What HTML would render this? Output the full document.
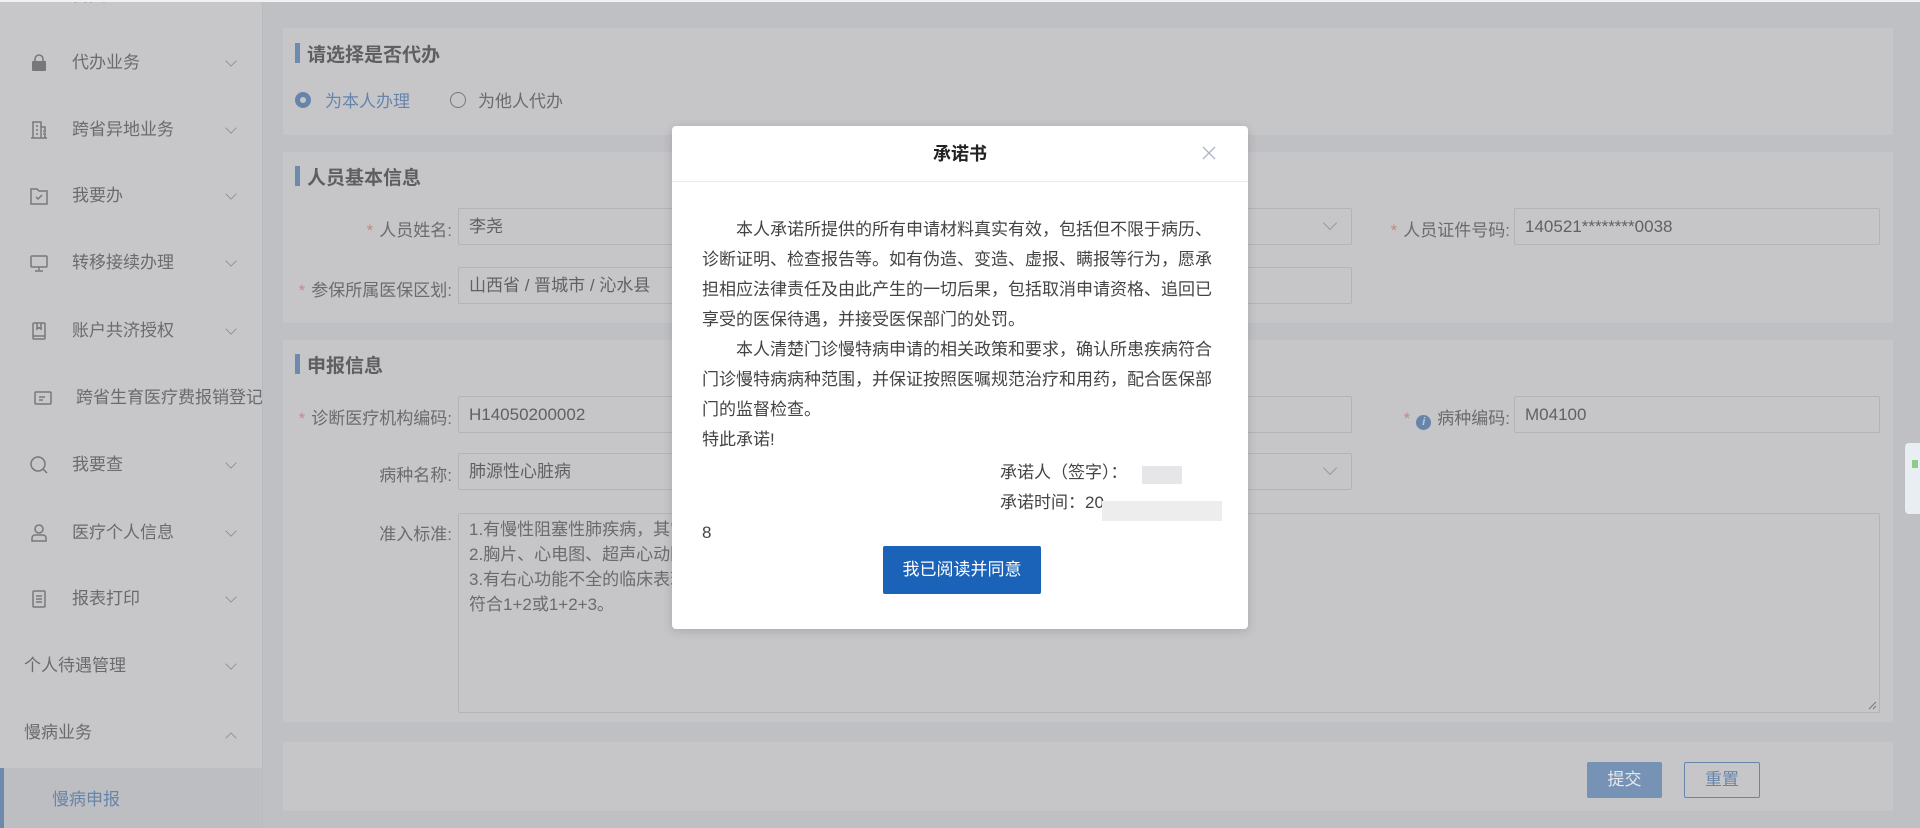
<!DOCTYPE html>
<html><head><meta charset="utf-8">
<style>
*{margin:0;padding:0;box-sizing:border-box}
body{width:1920px;height:828px;overflow:hidden;background:#bfc0c4;font-family:"Liberation Sans","Noto Sans CJK SC",sans-serif;position:relative;color:#6b6b6e}
.a{position:absolute}
#side{left:0;top:0;width:263px;height:828px;background:#c7c7ca;border-right:1px solid #b9babd;overflow:hidden}
.mi{position:absolute;left:0;width:262px;height:40px;font-size:17px;color:#6b6b6e;line-height:40px;white-space:nowrap;overflow:hidden}
.mi .ic{position:absolute;left:30px;top:11px;width:18px;height:18px}
.mi .t{position:absolute;left:72px;top:0}
.chev{position:absolute;left:226px;top:13px;width:10px;height:10px;border-right:1.3px solid #8a8a8e;border-bottom:1.3px solid #8a8a8e;transform:rotate(45deg) scale(0.8,0.8)}
.card{position:absolute;left:283px;width:1610px;background:#c6c6c9}
.title{position:absolute;left:12px;font-size:19px;font-weight:bold;color:#5f5f62;padding-left:12px}
.title:before{content:"";position:absolute;left:0;top:3px;width:5px;height:20px;background:#6d89ae}
.lbl{position:absolute;font-size:17px;color:#6b6b6e;text-align:right;white-space:nowrap}
.lbl i{font-style:normal;color:#c48888;margin-right:6px}
.inp{position:absolute;height:37px;border:1px solid #b3b4b8;background:#c6c6c9;border-radius:2px;font-size:17px;color:#616164;line-height:35px;padding-left:10px;white-space:nowrap;overflow:hidden}
.sel:after{content:"";position:absolute;right:16px;top:9px;width:9px;height:9px;border-right:1.3px solid #9a9a9e;border-bottom:1.3px solid #9a9a9e;transform:rotate(45deg)}
#modal{left:672px;top:126px;width:576px;height:503px;background:#fff;border-radius:4px;box-shadow:0 2px 10px rgba(0,0,0,.15)}
#modal .hd{position:absolute;left:0;top:0;width:576px;height:56px;border-bottom:1px solid #e8eaec;text-align:center;font-size:18px;font-weight:bold;color:#222;line-height:56px}
#modal .bd{position:absolute;left:30px;top:89px;width:520px;font-size:17px;line-height:30px;color:#444;white-space:nowrap}
</style></head><body>
<div class="a" style="left:0;top:0;width:1920px;height:2px;background:#f2f2f2;z-index:5"></div>
<div id="side" class="a">
  <div class="a" style="left:30px;top:-8px;width:16px;height:9px;border:2px solid #808084;border-top:none"></div>
  <div class="a" style="left:72px;top:-19px;font-size:17px;color:#6b6b6e">首页</div>

  <div class="mi" style="top:43px"><svg class="ic" viewBox="0 0 18 18"><path d="M5 7V5a4 4 0 0 1 8 0v2" fill="none" stroke="#78787c" stroke-width="1.6"/><rect x="2" y="7" width="14" height="10" rx="1" fill="#78787c"/></svg><span class="t">代办业务</span><span class="chev"></span></div>
  <div class="mi" style="top:110px"><svg class="ic" viewBox="0 0 18 18" fill="none" stroke="#78787c" stroke-width="1.5"><path d="M3 17V1h8v16M11 6h4v11M1 17h16M6 5h2M6 9h2M6 13h2M13 10h1M13 13h1"/></svg><span class="t">跨省异地业务</span><span class="chev"></span></div>
  <div class="mi" style="top:176px"><svg class="ic" viewBox="0 0 18 18" fill="none" stroke="#78787c" stroke-width="1.5"><path d="M1 2h6l2 2h8v13H1z"/><path d="M6 10l2 2 4-4"/></svg><span class="t">我要办</span><span class="chev"></span></div>
  <div class="mi" style="top:243px"><svg class="ic" viewBox="0 0 18 18" fill="none" stroke="#78787c" stroke-width="1.5"><rect x="1" y="2" width="16" height="11" rx="1"/><path d="M9 13v3M5 17h8"/></svg><span class="t">转移接续办理</span><span class="chev"></span></div>
  <div class="mi" style="top:311px"><svg class="ic" viewBox="0 0 18 18" fill="none" stroke="#78787c" stroke-width="1.5"><rect x="3" y="1" width="12" height="16" rx="1"/><path d="M7 1v6l2-1.5 2 1.5V1M3 14h12"/></svg><span class="t">账户共济授权</span><span class="chev"></span></div>
  <div class="mi" style="top:378px"><svg class="ic" viewBox="0 0 18 18" fill="none" stroke="#78787c" stroke-width="1.5" style="left:34px"><rect x="1" y="3" width="16" height="12" rx="1"/><path d="M5 8h6M5 11h4"/></svg><span class="t" style="left:76px">跨省生育医疗费报销登记</span></div>
  <div class="mi" style="top:445px"><svg class="ic" viewBox="0 0 18 18" fill="none" stroke="#78787c" stroke-width="1.5"><circle cx="8" cy="8" r="7"/><path d="M13 13l4 4"/></svg><span class="t">我要查</span><span class="chev"></span></div>
  <div class="mi" style="top:513px"><svg class="ic" viewBox="0 0 18 18" fill="none" stroke="#78787c" stroke-width="1.5"><circle cx="9" cy="5" r="4"/><path d="M2 17v-3a3 3 0 0 1 3-3h8a3 3 0 0 1 3 3v3z"/></svg><span class="t">医疗个人信息</span><span class="chev"></span></div>
  <div class="mi" style="top:579px"><svg class="ic" viewBox="0 0 18 18" fill="none" stroke="#78787c" stroke-width="1.5"><rect x="3" y="1" width="12" height="16" rx="1"/><path d="M6 6h6M6 9h6M6 12h6"/></svg><span class="t">报表打印</span><span class="chev"></span></div>
  <div class="mi" style="top:646px"><span class="t" style="left:24px">个人待遇管理</span><span class="chev"></span></div>
  <div class="mi" style="top:713px"><span class="t" style="left:24px">慢病业务</span><span class="chev" style="transform:rotate(-135deg) scale(0.8,0.8);top:20px"></span></div>
  <div class="a" style="left:0;top:768px;width:262px;height:60px;background:#bdbec2"></div>
  <div class="a" style="left:0;top:768px;width:4px;height:60px;background:#6d89ae"></div>
  <div class="mi" style="top:780px;color:#6784ab"><span class="t" style="left:52px">慢病申报</span></div>
</div>

<div class="card" style="top:28px;height:107px">
  <div class="title" style="top:12px">请选择是否代办</div>
  <div class="a" style="left:12px;top:64px;width:16px;height:16px;border-radius:50%;background:#6784ab"></div>
  <div class="a" style="left:17px;top:69px;width:6px;height:6px;border-radius:50%;background:#c6c6c9"></div>
  <div class="a" style="left:42px;top:59px;font-size:17px;color:#6784ab">为本人办理</div>
  <div class="a" style="left:167px;top:64px;width:16px;height:16px;border-radius:50%;border:1.3px solid #78787c"></div>
  <div class="a" style="left:195px;top:59px;font-size:17px;color:#6b6b6e">为他人代办</div>
</div>

<div class="card" style="top:152px;height:171px">
  <div class="title" style="top:11px">人员基本信息</div>
</div>
<div class="lbl" style="right:1468px;top:216px"><i>*</i>人员姓名:</div>
<div class="inp" style="left:458px;top:208px;width:300px">李尧</div>
<div class="inp sel" style="left:1000px;top:208px;width:352px"></div>
<div class="lbl" style="right:410px;top:216px"><i>*</i>人员证件号码:</div>
<div class="inp" style="left:1514px;top:208px;width:366px">140521********0038</div>
<div class="lbl" style="right:1468px;top:276px"><i>*</i>参保所属医保区划:</div>
<div class="inp" style="left:458px;top:267px;width:894px">山西省 / 晋城市 / 沁水县</div>

<div class="card" style="top:340px;height:382px">
  <div class="title" style="top:11px">申报信息</div>
</div>
<div class="lbl" style="right:1468px;top:404px"><i>*</i>诊断医疗机构编码:</div>
<div class="inp" style="left:458px;top:396px;width:894px">H14050200002</div>
<div class="lbl" style="right:410px;top:404px"><i>*</i><span style="display:inline-block;width:15px;height:15px;border-radius:50%;background:#6784ab;color:#c6c6c9;font-size:11px;line-height:15px;text-align:center;font-weight:bold;font-style:italic;margin-right:6px;vertical-align:-1px">i</span>病种编码:</div>
<div class="inp" style="left:1514px;top:396px;width:366px">M04100</div>
<div class="lbl" style="right:1468px;top:461px">病种名称:</div>
<div class="inp sel" style="left:458px;top:453px;width:894px">肺源性心脏病</div>
<div class="lbl" style="right:1468px;top:520px">准入标准:</div>
<div class="inp" style="left:458px;top:513px;width:1422px;height:200px;line-height:25px;padding-top:3px;color:#6b6b6e">1.有慢性阻塞性肺疾病，其它胸肺疾病或肺血管病变；<br>2.胸片、心电图、超声心动图有肺动脉增宽和右心增大肥厚的征象；<br>3.有右心功能不全的临床表现。<br>符合1+2或1+2+3。
<svg class="a" style="right:2px;bottom:2px" width="10" height="10"><path d="M9 2L2 9M9 6L6 9" stroke="#777" stroke-width="1"/></svg></div>

<div class="card" style="top:742px;height:69px">
  <div class="a" style="left:1304px;top:20px;width:75px;height:36px;background:#7692b5;border-radius:2px;color:#e4e8ee;font-size:17px;text-align:center;line-height:36px">提交</div>
  <div class="a" style="left:1401px;top:20px;width:76px;height:36px;border:1px solid #6784ab;border-radius:2px;color:#6784ab;font-size:17px;text-align:center;line-height:34px">重置</div>
</div>
<div class="a" style="left:1905px;top:443px;width:15px;height:71px;background:#e9eef2;border-radius:4px 0 0 4px"></div>
<div class="a" style="left:1912px;top:460px;width:6px;height:8px;background:#8fc98c"></div>

<div id="modal" class="a">
  <div class="hd">承诺书</div>
  <svg class="a" style="left:530px;top:20px" width="14" height="14"><path d="M1 1L13 13M13 1L1 13" stroke="#a9b6c8" stroke-width="1.3"/></svg>
  <div class="bd">　　本人承诺所提供的所有申请材料真实有效，包括但不限于病历、<br>诊断证明、检查报告等。如有伪造、变造、虚报、瞒报等行为，愿承<br>担相应法律责任及由此产生的一切后果，包括取消申请资格、追回已<br>享受的医保待遇，并接受医保部门的处罚。<br>　　本人清楚门诊慢特病申请的相关政策和要求，确认所患疾病符合<br>门诊慢特病病种范围，并保证按照医嘱规范治疗和用药，配合医保部<br>门的监督检查。<br>特此承诺!</div>
  <div class="a" style="left:328px;top:332px;font-size:17px;line-height:30px;color:#444;white-space:nowrap">承诺人（签字）：<br>承诺时间：20</div>
  <div class="a" style="left:470px;top:340px;width:40px;height:18px;background:#e6e6e8"></div>
  <div class="a" style="left:430px;top:375px;width:120px;height:20px;background:#ededee"></div>
  <div class="a" style="left:30px;top:392px;font-size:17px;line-height:30px;color:#444">8</div>
  <div class="a" style="left:211px;top:420px;width:158px;height:48px;background:#1a63b8;border-radius:2px;color:#fff;font-size:17px;text-align:center;line-height:48px">我已阅读并同意</div>
</div>
</body></html>
